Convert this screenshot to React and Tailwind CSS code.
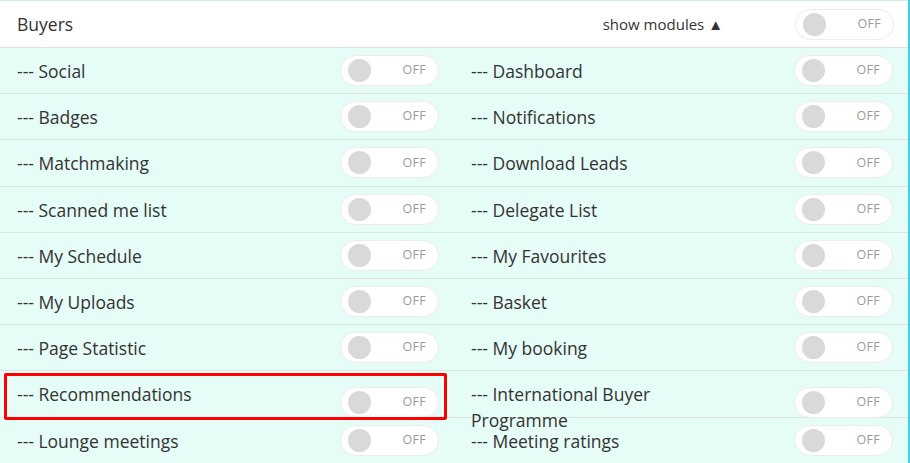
import React from 'react';

const left = ['Social', 'Badges', 'Matchmaking', 'Scanned me list', 'My Schedule', 'My Uploads', 'Page Statistic', 'Recommendations', 'Lounge meetings'];
const right = ['Dashboard', 'Notifications', 'Download Leads', 'Delegate List', 'My Favourites', 'Basket', 'My booking', 'International Buyer Programme', 'Meeting ratings'];

function Toggle() {
  return (
    <div className="w-[99px] h-[31px] shrink-0 rounded-full bg-white border border-[#ececec] flex items-center justify-between pl-[7px] pr-[12px]">
      <div className="w-[23px] h-[23px] rounded-full bg-[#d9d9d9]" />
      <span className="text-[12.5px] text-[#9a9a9a] tracking-[0.3px]">OFF</span>
    </div>
  );
}

function Cell({ label, marked }) {
  return (
    <div className="relative h-full flex justify-between pl-[17px] pr-[15px]">
      <div className="w-[240px] pt-[10px] leading-[26px] text-[17.5px] text-[#333] whitespace-normal">--- {label}</div>
      <div className="flex items-center">
        <Toggle />
      </div>
      {marked && (
        <div className="absolute top-[2px] left-[4px] w-[443px] h-[47px] border-[3px] border-[#ff0000] rounded-[2px] pointer-events-none" />
      )}
    </div>
  );
}

export default function App() {
  return (
    <div className="w-[910px] h-[463px] overflow-hidden bg-[#e6fcf7]" style={{ fontFamily: '"Open Sans", "Noto Sans", sans-serif' }}>
      <div className="w-[908px] h-full border-r-2 border-[#37d3ec] box-content">
        <div className="border-t border-[#cfeee7]" />
        <div className="h-[47px] bg-white border-b border-[#dde5e3] flex items-center pl-[17px] pr-[14px]">
          <span className="text-[17.5px] text-[#333]">Buyers</span>
          <span className="ml-auto mr-[72px] text-[15px] text-[#333]">show modules ▲</span>
          <Toggle />
        </div>
        {left.map((l, i) => (
          <div key={l} className="h-[46.2px] border-b border-[#dde5e3] grid grid-cols-2">
            <Cell label={l} marked={l === 'Recommendations'} />
            <Cell label={right[i]} />
          </div>
        ))}
      </div>
    </div>
  );
}
